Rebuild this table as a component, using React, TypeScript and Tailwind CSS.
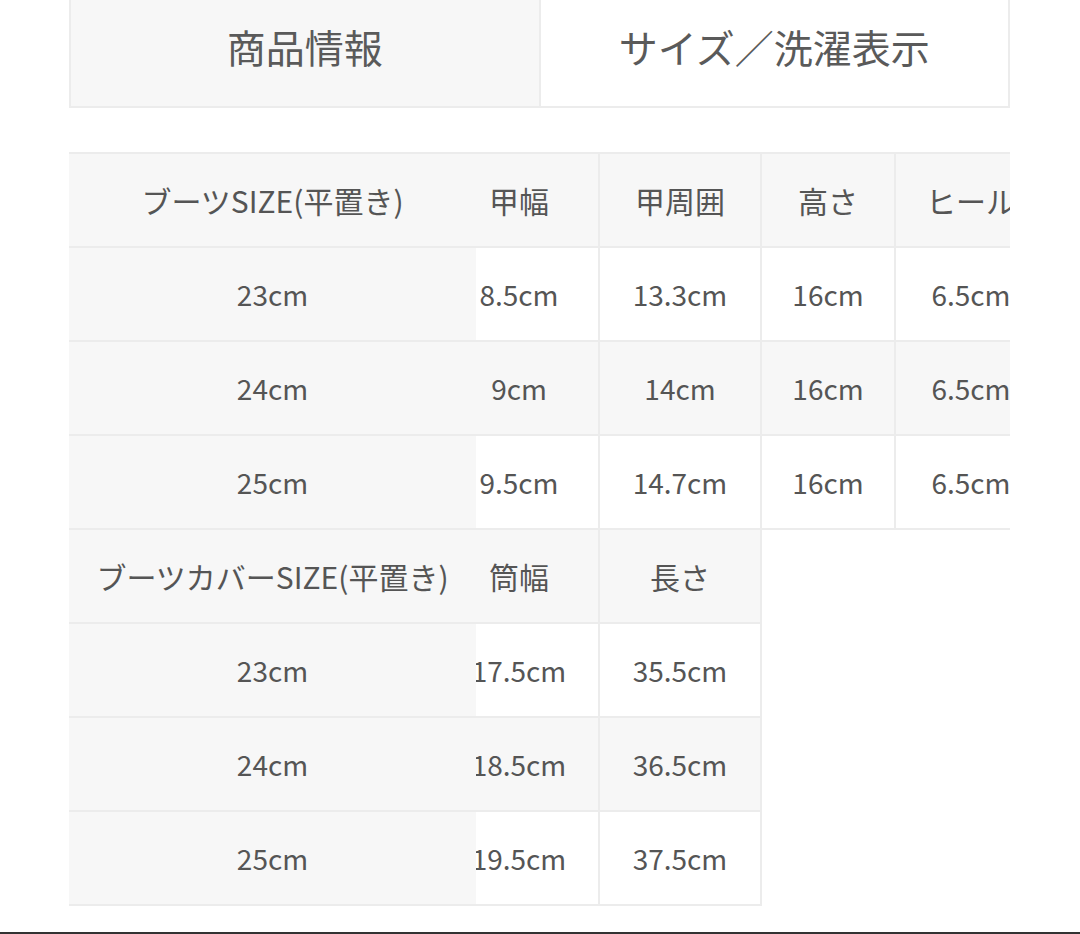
const font = { fontFamily: '"Noto Sans CJK JP", "Noto Sans", sans-serif' };

const boots = {
  head: ["ブーツSIZE(平置き)", "甲幅", "甲周囲", "高さ", "ヒール"],
  rows: [
    ["23cm", "8.5cm", "13.3cm", "16cm", "6.5cm"],
    ["24cm", "9cm", "14cm", "16cm", "6.5cm"],
    ["25cm", "9.5cm", "14.7cm", "16cm", "6.5cm"],
  ],
};

const covers = {
  head: ["ブーツカバーSIZE(平置き)", "筒幅", "長さ"],
  rows: [
    ["23cm", "17.5cm", "35.5cm"],
    ["24cm", "18.5cm", "36.5cm"],
    ["25cm", "19.5cm", "37.5cm"],
  ],
};

const colClass = [
  "w-[407px]",
  "w-[124px] pr-[36px] border-r-2 border-[#ececec]",
  "w-[162px] border-r-2 border-[#ececec]",
  "w-[134px] border-r-2 border-[#ececec]",
  "w-[150px]",
];

function Row({ cells, head, gray }: { cells: string[]; head?: boolean; gray?: boolean }) {
  return (
    <div className="flex w-fit h-[94px] border-b-2 border-[#ececec]">
      {cells.map((c, i) => (
        <div
          key={i}
          className={`${colClass[i]} shrink-0 flex items-center justify-center overflow-hidden whitespace-nowrap ${
            head || gray || i === 0 ? "bg-[#f7f7f7]" : "bg-white"
          } ${head ? "text-[30px]" : "text-[28px]"}`}
        >
          {c}
        </div>
      ))}
    </div>
  );
}

export default function App() {
  return (
    <div className="h-[934px] flex flex-col bg-white text-[#555]" style={font}>
      <div className="ml-[69px] w-[941px] flex h-[108px]">
        <div className="flex-1 bg-[#f7f7f7] border-2 border-t-0 border-[#ececec] flex items-center justify-center pb-[14px] text-[39px] text-[#5a5a5a]">
          商品情報
        </div>
        <div className="flex-1 bg-white border-2 border-t-0 border-l-0 border-[#ececec] flex items-center justify-center pb-[14px] text-[39px] text-[#5a5a5a]">
          サイズ／洗濯表示
        </div>
      </div>

      <div className="ml-[69px] w-[941px] mt-[44px] overflow-hidden">
        <div className="border-t-2 border-[#ececec] w-fit">
          <Row cells={boots.head} head />
          {boots.rows.map((r, i) => (
            <Row key={r[0]} cells={r} gray={i === 1} />
          ))}
        </div>
        <Row cells={covers.head} head />
        {covers.rows.map((r, i) => (
          <Row key={r[0]} cells={r} gray={i === 1} />
        ))}
      </div>

      <div className="mt-auto h-[2px] bg-[#333]" />
    </div>
  );
}
